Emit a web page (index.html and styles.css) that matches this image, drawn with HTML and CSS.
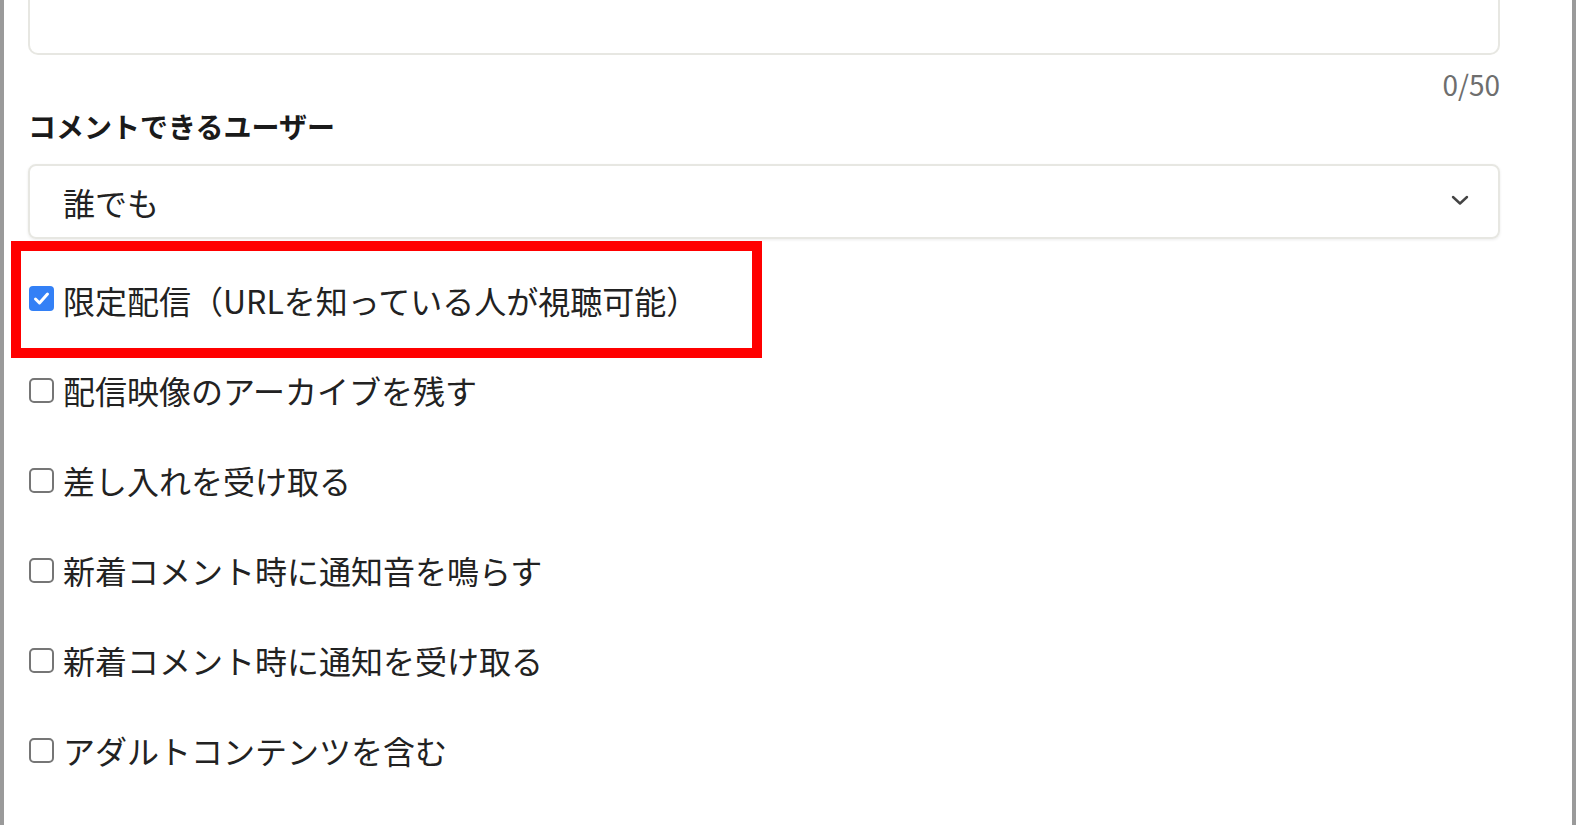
FILE: index.html
```html
<!DOCTYPE html>
<html lang="ja">
<head>
<meta charset="utf-8">
<title>配信設定</title>
<link rel="stylesheet" href="styles.css">
</head>
<body>
<div class="frame">
  <div class="form">
    <div class="textarea"></div>
    <div class="counter">0/50</div>
    <div class="field-label">コメントできるユーザー</div>
    <div class="select">
      <span class="select-value">誰でも</span>
      <svg class="chevron" width="18" height="11" viewBox="0 0 18 11"><path d="M2 2 L9 8.5 L16 2" fill="none" stroke="#444" stroke-width="2.4" stroke-linecap="round" stroke-linejoin="round"/></svg>
    </div>
    <ul class="options">
      <li class="option"><span class="box checked"><svg width="25" height="25" viewBox="0 0 25 25"><path d="M6.5 13 L10.5 17 L18.5 8" fill="none" stroke="#fff" stroke-width="3" stroke-linecap="round" stroke-linejoin="round"/></svg></span><span class="option-text">限定配信（URLを知っている人が視聴可能）</span></li>
      <li class="option"><span class="box"></span><span class="option-text">配信映像のアーカイブを残す</span></li>
      <li class="option"><span class="box"></span><span class="option-text">差し入れを受け取る</span></li>
      <li class="option"><span class="box"></span><span class="option-text">新着コメント時に通知音を鳴らす</span></li>
      <li class="option"><span class="box"></span><span class="option-text">新着コメント時に通知を受け取る</span></li>
      <li class="option"><span class="box"></span><span class="option-text">アダルトコンテンツを含む</span></li>
    </ul>
  </div>
  <div class="highlight"></div>
</div>
</body>
</html>
```

FILE: styles.css
```css
html, body {
  margin: 0;
  padding: 0;
  background: #ffffff;
}
body {
  font-family: "Noto Sans CJK JP", "Noto Sans", sans-serif;
  color: #222222;
  overflow: hidden;
}
.frame {
  position: relative;
  height: 825px;
  box-sizing: border-box;
  border-left: 4px solid #9a9a9a;
  border-right: 4px solid #9a9a9a;
  padding: 0 72px 0 24px;
}
.form {
  display: flex;
  flex-direction: column;
}
.textarea {
  height: 55px;
  box-sizing: border-box;
  border: 2px solid #e7e7e2;
  border-top: none;
  border-radius: 0 0 10px 10px;
}
.counter {
  margin-top: 8px;
  font-size: 28px;
  line-height: 42px;
  text-align: right;
  color: #6e6e6e;
}
.field-label {
  margin-top: 0;
  font-size: 28px;
  line-height: 42px;
  font-weight: 700;
  color: #1a1a1a;
}
.select {
  margin-top: 17px;
  height: 75px;
  box-sizing: border-box;
  border: 2px solid #e7e7e2;
  border-radius: 8px;
  box-shadow: 0 1px 3px rgba(0, 0, 0, 0.08);
  display: flex;
  align-items: center;
  justify-content: space-between;
  padding: 1px 29px 0 33px;
}
.select-value {
  font-size: 32px;
  line-height: 40px;
  color: #222222;
}
.chevron {
  display: block;
  margin-top: -3px;
}
.options {
  list-style: none;
  margin: 16px 0 0 0;
  padding: 0;
}
.option {
  height: 90px;
  display: flex;
  align-items: center;
  gap: 9px;
  padding-left: 1px;
}
.box {
  width: 25px;
  height: 25px;
  box-sizing: border-box;
  border: 2px solid #767676;
  border-radius: 5px;
  background: #ffffff;
  flex: none;
  display: flex;
  align-items: center;
  justify-content: center;
}
.box.checked {
  border: none;
  background: #3380f6;
  border-radius: 4px;
  margin-top: -4px;
}
.box svg {
  display: block;
}
.option-text {
  font-size: 32px;
  line-height: 40px;
  color: #222222;
}
.highlight {
  position: absolute;
  left: 7px;
  top: 241px;
  width: 751px;
  height: 117px;
  box-sizing: border-box;
  border: 10px solid #ff0000;
}
```
